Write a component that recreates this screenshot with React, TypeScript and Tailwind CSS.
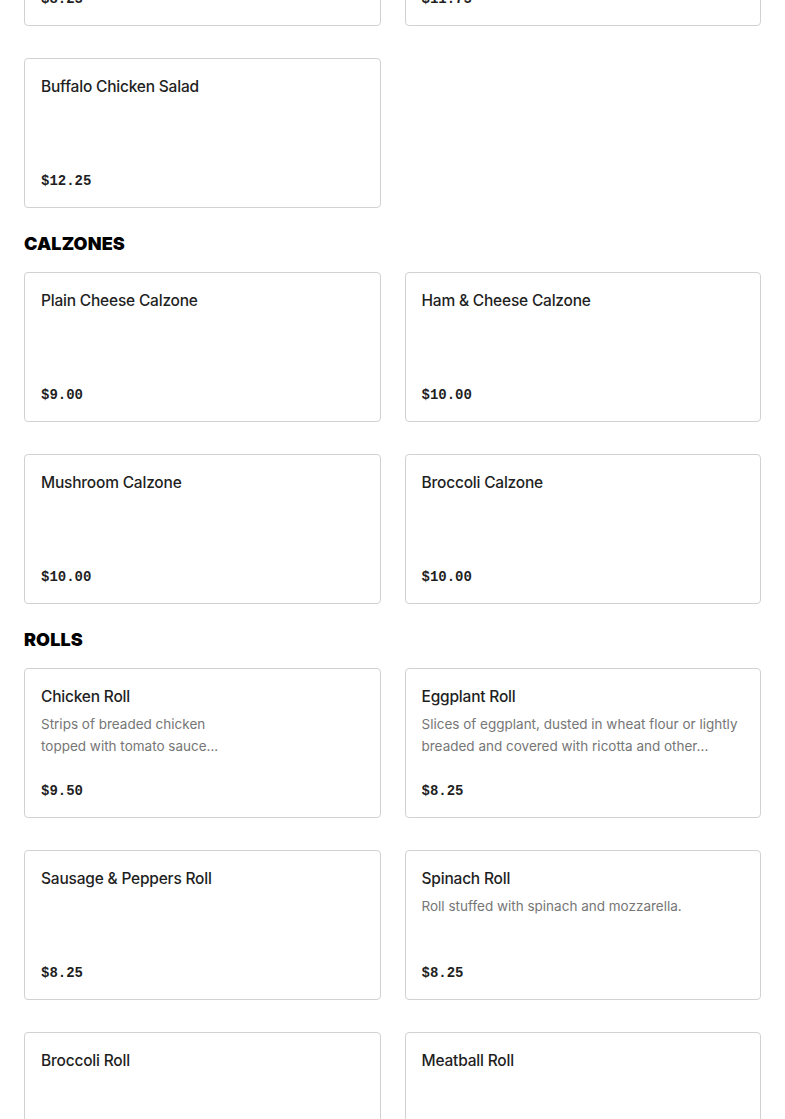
type Item = { name: string; price: string; desc?: string[] };

const sections: { title?: string; items: Item[] }[] = [
  {
    items: [
      { name: "Chef Salad", price: "$8.25" },
      { name: "Grilled Chicken Salad", price: "$11.75" },
      { name: "Buffalo Chicken Salad", price: "$12.25" },
    ],
  },
  {
    title: "CALZONES",
    items: [
      { name: "Plain Cheese Calzone", price: "$9.00" },
      { name: "Ham & Cheese Calzone", price: "$10.00" },
      { name: "Mushroom Calzone", price: "$10.00" },
      { name: "Broccoli Calzone", price: "$10.00" },
    ],
  },
  {
    title: "ROLLS",
    items: [
      { name: "Chicken Roll", price: "$9.50", desc: ["Strips of breaded chicken", "topped with tomato sauce..."] },
      {
        name: "Eggplant Roll",
        price: "$8.25",
        desc: ["Slices of eggplant, dusted in wheat flour or lightly", "breaded and covered with ricotta and other..."],
      },
      { name: "Sausage & Peppers Roll", price: "$8.25" },
      { name: "Spinach Roll", price: "$8.25", desc: ["Roll stuffed with spinach and mozzarella."] },
      { name: "Broccoli Roll", price: "$8.25" },
      { name: "Meatball Roll", price: "$9.00" },
    ],
  },
];

function Card({ item }: { item: Item }) {
  return (
    <div className="h-[150px] flex flex-col justify-between border border-[#d2d2d2] rounded-[4px] bg-white px-4 py-4">
      <div>
        <h4 className="text-[15.5px] leading-6 font-medium text-[#1f1f1f] font-['Inter',sans-serif] tracking-[-0.2px]">
          {item.name}
        </h4>
        {item.desc && (
          <p className="mt-1 text-[13.5px] leading-[22px] text-[#767676] font-['Inter',sans-serif]">
            {item.desc.map((l, i) => (
              <span key={i} className="block whitespace-nowrap">
                {l}
              </span>
            ))}
          </p>
        )}
      </div>
      <span className="text-[14px] leading-5 font-bold text-[#1f1f1f] font-['Liberation_Mono',monospace]">
        {item.price}
      </span>
    </div>
  );
}

export default function App() {
  return (
    <div className="bg-white min-h-screen overflow-hidden">
      <div className="px-6 -mt-[124px] pb-10">
        {sections.map((s, i) => (
          <section key={i} className={s.title ? "mt-6" : ""}>
            {s.title && (
              <h2 className="text-[18px] leading-6 font-black text-black mb-4 font-['Inter',sans-serif] tracking-[0.1px]">
                {s.title}
              </h2>
            )}
            <div className="grid grid-cols-2 gap-x-6 gap-y-8">
              {s.items.map((item, j) => (
                <Card key={j} item={item} />
              ))}
            </div>
          </section>
        ))}
      </div>
    </div>
  );
}
